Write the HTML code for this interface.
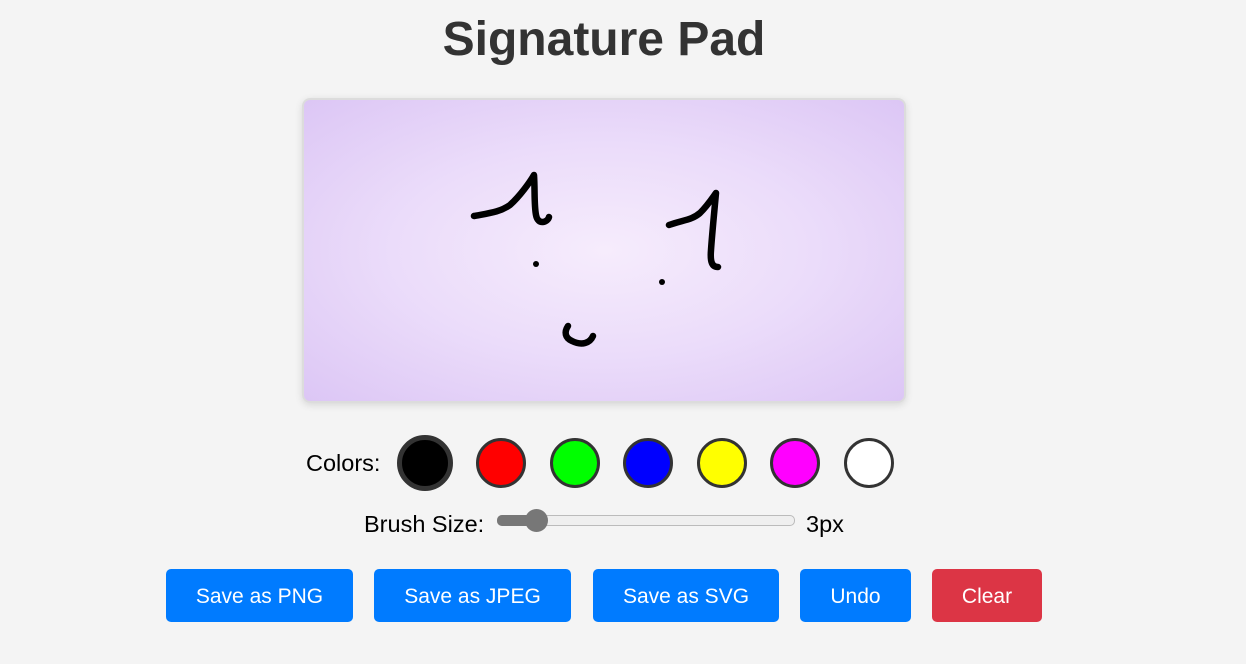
<!DOCTYPE html>
<html><head><style>
body{margin:0;background:#f4f4f4;font-family:"Liberation Sans",Arial,sans-serif;width:1246px;height:664px;overflow:hidden;position:relative}
h1{position:absolute;top:12px;left:0;width:1208px;text-align:center;margin:0;font-size:48px;font-weight:bold;color:#333}
.cv{position:absolute;left:302px;top:98px;width:600px;height:301px;border:2px solid #dcdcdc;border-radius:8px;box-shadow:0 2px 8px rgba(0,0,0,.12);background:radial-gradient(ellipse at 50% 50%,#f6ecfc 0%,#ebdcfa 50%,#dcc6f5 100%);overflow:hidden}
.lbl{position:absolute;font-size:23.5px;color:#000}
.sw{position:absolute;width:44px;height:44px;border:3px solid #333;border-radius:50%}
.btn{position:absolute;top:569px;height:53px;line-height:55px;text-align:center;color:#fff;font-size:21px;background:#007bff;border-radius:5px}
</style></head><body>
<h1>Signature Pad</h1>
<div class="cv"><svg width="600" height="301" viewBox="304 100 600 301" style="display:block">
<g fill="none" stroke="#000" stroke-width="6.5" stroke-linecap="round" stroke-linejoin="round">
<path d="M474 216 C490 213 500 212 510 205 C520 196 530 182 534 175 C535 190 534 205 536 215 C538 226 548 222 549 217"/>
<path d="M669 225 C683 220 692 220 700 213 C708 205 713 197 716 193 C714 215 712 235 711 250 C710 262 712 267 718 267"/>
<path d="M568 326 C564 332 565 338 572 341 C582 346 590 343 593 336"/>
</g>
<circle cx="536" cy="264" r="3"/><circle cx="662" cy="282" r="3"/>
</svg></div>
<div class="lbl" style="left:306px;top:450px">Colors:</div>
<div class="sw" style="left:397px;top:435px;width:46px;height:46px;border-width:5px;background:#000"></div>
<div class="sw" style="left:476px;top:438px;background:#f00"></div>
<div class="sw" style="left:550px;top:438px;background:#0f0"></div>
<div class="sw" style="left:623px;top:438px;background:#00f"></div>
<div class="sw" style="left:697px;top:438px;background:#ff0"></div>
<div class="sw" style="left:770px;top:438px;background:#f0f"></div>
<div class="sw" style="left:844px;top:438px;background:#fff"></div>
<div class="lbl" style="left:364px;top:511px">Brush Size:</div>
<div style="position:absolute;left:497px;top:515px;width:296px;height:9px;border:1px solid #bbb;border-radius:5px;background:#efefef"></div>
<div style="position:absolute;left:497px;top:515px;width:40px;height:11px;border-radius:5px;background:#777"></div>
<div style="position:absolute;left:525px;top:509px;width:23px;height:23px;border-radius:50%;background:#777"></div>
<div class="lbl" style="left:806px;top:511px">3px</div>
<div class="btn" style="left:166px;width:187px">Save as PNG</div>
<div class="btn" style="left:374px;width:197px">Save as JPEG</div>
<div class="btn" style="left:593px;width:186px">Save as SVG</div>
<div class="btn" style="left:800px;width:111px">Undo</div>
<div class="btn" style="left:932px;width:110px;background:#dc3545">Clear</div>
</body></html>
